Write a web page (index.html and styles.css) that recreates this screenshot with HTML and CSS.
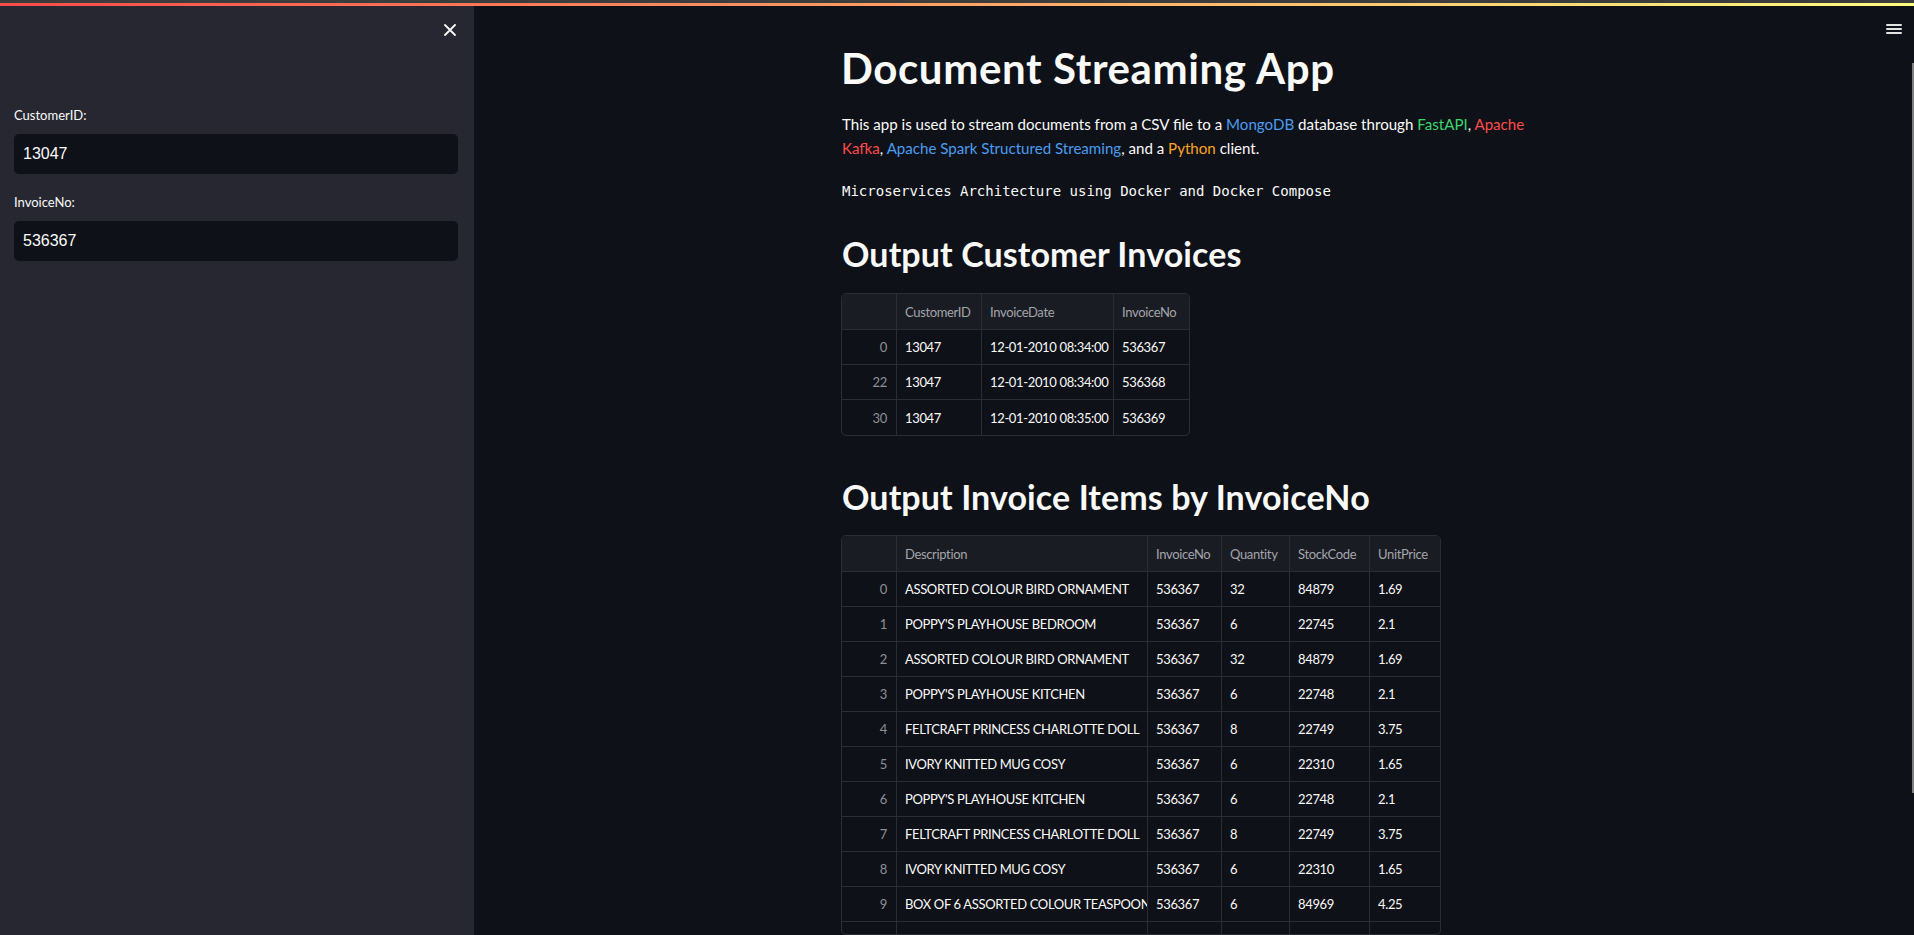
FILE: index.html
```html
<!DOCTYPE html>
<html lang="en">
<head>
<meta charset="utf-8">
<title>Document Streaming App</title>
<link rel="stylesheet" href="styles.css">
</head>
<body>
<div class="chrome"></div>
<div class="decoration"></div>
<div class="app">
  <aside class="sidebar">
    <div class="sidebar-head">
      <button class="close" aria-label="Close sidebar">
        <svg width="12" height="12" viewBox="0 0 12 12"><path d="M1 1 L11 11 M11 1 L1 11" stroke="#fafafa" stroke-width="1.8" stroke-linecap="round" fill="none"/></svg>
      </button>
    </div>
    <div class="field">
      <label class="label">CustomerID:</label>
      <div class="input">13047</div>
    </div>
    <div class="field second">
      <label class="label">InvoiceNo:</label>
      <div class="input">536367</div>
    </div>
  </aside>
  <main class="main">
    <div class="menu" aria-label="Main menu"><span></span><span></span><span></span></div>
    <div class="block">
      <h1 class="title">Document Streaming App</h1>
      <p class="intro">This app is used to stream documents from a CSV file to a <span class="c-blue">MongoDB</span> database through <span class="c-green">FastAPI</span>, <span class="c-red">Apache</span> <span class="c-red">Kafka</span>, <span class="c-blue">Apache Spark Structured Streaming</span>, and a <span class="c-orange">Python</span> client.</p>
      <p class="mono">Microservices Architecture using Docker and Docker Compose</p>

      <h2 class="heading h-first">Output Customer Invoices</h2>
      <div class="frame frame-1">
        <table class="grid grid-1">
          <colgroup><col class="w55"><col class="w85"><col class="w132"><col class="w75"></colgroup>
          <thead><tr><th class="idx"></th><th>CustomerID</th><th>InvoiceDate</th><th>InvoiceNo</th></tr></thead>
          <tbody>
            <tr><td class="idx">0</td><td>13047</td><td>12-01-2010 08:34:00</td><td>536367</td></tr>
            <tr><td class="idx">22</td><td>13047</td><td>12-01-2010 08:34:00</td><td>536368</td></tr>
            <tr><td class="idx">30</td><td>13047</td><td>12-01-2010 08:35:00</td><td>536369</td></tr>
          </tbody>
        </table>
      </div>

      <h2 class="heading h-second">Output Invoice Items by InvoiceNo</h2>
      <div class="frame frame-2">
        <table class="grid grid-2">
          <colgroup><col class="w55"><col class="w251"><col class="w74"><col class="w68"><col class="w80"><col class="w70"></colgroup>
          <thead><tr><th class="idx"></th><th>Description</th><th>InvoiceNo</th><th>Quantity</th><th>StockCode</th><th>UnitPrice</th></tr></thead>
          <tbody>
            <tr><td class="idx">0</td><td>ASSORTED COLOUR BIRD ORNAMENT</td><td>536367</td><td>32</td><td>84879</td><td>1.69</td></tr>
            <tr><td class="idx">1</td><td>POPPY'S PLAYHOUSE BEDROOM</td><td>536367</td><td>6</td><td>22745</td><td>2.1</td></tr>
            <tr><td class="idx">2</td><td>ASSORTED COLOUR BIRD ORNAMENT</td><td>536367</td><td>32</td><td>84879</td><td>1.69</td></tr>
            <tr><td class="idx">3</td><td>POPPY'S PLAYHOUSE KITCHEN</td><td>536367</td><td>6</td><td>22748</td><td>2.1</td></tr>
            <tr><td class="idx">4</td><td>FELTCRAFT PRINCESS CHARLOTTE DOLL</td><td>536367</td><td>8</td><td>22749</td><td>3.75</td></tr>
            <tr><td class="idx">5</td><td>IVORY KNITTED MUG COSY</td><td>536367</td><td>6</td><td>22310</td><td>1.65</td></tr>
            <tr><td class="idx">6</td><td>POPPY'S PLAYHOUSE KITCHEN</td><td>536367</td><td>6</td><td>22748</td><td>2.1</td></tr>
            <tr><td class="idx">7</td><td>FELTCRAFT PRINCESS CHARLOTTE DOLL</td><td>536367</td><td>8</td><td>22749</td><td>3.75</td></tr>
            <tr><td class="idx">8</td><td>IVORY KNITTED MUG COSY</td><td>536367</td><td>6</td><td>22310</td><td>1.65</td></tr>
            <tr><td class="idx">9</td><td>BOX OF 6 ASSORTED COLOUR TEASPOONS</td><td>536367</td><td>6</td><td>84969</td><td>4.25</td></tr>
            <tr><td class="idx"></td><td></td><td></td><td></td><td></td><td></td></tr>
          </tbody>
        </table>
      </div>
    </div>
    <div class="scrollbar"></div>
  </main>
</div>
</body>
</html>
```

FILE: styles.css
```css
* { box-sizing: border-box; }
html, body { margin: 0; padding: 0; }
body {
  width: 1914px;
  height: 935px;
  overflow: hidden;
  background: #0e1117;
  color: #fafafa;
  font-family: Lato, "Noto Sans", sans-serif;
}
.chrome { height: 3px; background: #3c3c3c; }
.decoration { height: 3px; background: linear-gradient(90deg, #ff4b4b, #fffd80); }

.app { display: flex; height: 929px; }

.sidebar {
  width: 474px;
  flex: none;
  background: #262730;
  padding: 0 16px 0 14px;
}
.sidebar-head {
  height: 48px;
  display: flex;
  align-items: center;
  justify-content: flex-end;
  padding-right: 2px;
}
.close {
  width: 12px; height: 12px;
  padding: 0; border: 0; background: none;
  display: flex;
}
.field { margin-top: 51px; }
.field.second { margin-top: 18px; }
.label {
  display: block;
  font-size: 13px;
  line-height: 20px;
  margin-bottom: 9px;
  color: #fafafa;
}
.input {
  height: 40px;
  background: #0e1117;
  border-radius: 5px;
  padding-left: 9px;
  display: flex;
  align-items: center;
  font-family: "Liberation Sans", Arial, sans-serif;
  font-size: 16px;
  color: #fafafa;
}

.main { flex: 1; position: relative; }
.menu {
  position: absolute;
  top: 18px;
  right: 12px;
  width: 16px;
  display: flex;
  flex-direction: column;
  gap: 2px;
}
.menu span { height: 2px; background: #e3e3e3; border-radius: 1px; }
.scrollbar {
  position: absolute;
  right: 0;
  top: 57px;
  width: 2px;
  height: 730px;
  background: #7f7f7f;
}

.block {
  width: 706px;
  margin: 0 auto;
  padding-top: 36px;
  display: flex;
  flex-direction: column;
}
.title {
  margin: 0;
  font-size: 42px;
  line-height: 52px;
  font-weight: 700;
  letter-spacing: 0.6px;
}
.intro {
  margin: 18px 0 0;
  font-size: 15.1px;
  line-height: 24px;
  padding-left: 1px;
}
.c-blue { color: #4a9df2; }
.c-green { color: #3dd56d; }
.c-red { color: #ff4b4b; }
.c-orange { color: #ffa421; }
.mono {
  margin: 21px 0 0;
  font-family: "DejaVu Sans Mono", "Liberation Mono", monospace;
  font-size: 14px;
  line-height: 20px;
  padding-left: 1px;
}
.heading {
  margin: 0;
  font-size: 34px;
  line-height: 40px;
  font-weight: 700;
  letter-spacing: 0.1px;
  padding-left: 1px;
}
.h-first { margin-top: 33px; }
.h-second { margin-top: 41px; }

.frame {
  border: 1px solid #2a2d35;
  border-radius: 5px;
  overflow: hidden;
  align-self: flex-start;
}
.frame-1 { margin-top: 19px; width: 349px; }
.frame-2 { margin-top: 18px; width: 600px; height: 400px; }

.grid {
  table-layout: fixed;
  border-collapse: separate;
  border-spacing: 0;
  font-size: 13px;
  letter-spacing: -0.35px;
}
.grid-1 { width: 347px; }
.grid-2 { width: 598px; }
.w55 { width: 55px; }
.w85 { width: 85px; }
.w132 { width: 132px; }
.w75 { width: 75px; }
.w251 { width: 251px; }
.w74 { width: 74px; }
.w68 { width: 68px; }
.w80 { width: 80px; }
.w70 { width: 70px; }

.grid th, .grid td {
  padding: 0 0 0 8px;
  white-space: nowrap;
  overflow: hidden;
  text-align: left;
  border-right: 1px solid #2a2d35;
  border-bottom: 1px solid #2a2d35;
}
.grid th:last-child, .grid td:last-child { border-right: 0; }
.grid tbody tr:last-child td { border-bottom: 0; }
.grid th {
  height: 36px;
  background: #1a1c23;
  color: #a3a5ab;
  font-weight: 400;
}
.grid td { height: 35px; color: #fafafa; }
.grid td.idx { text-align: right; color: #8e9097; padding: 0 9px 0 0; }
```
